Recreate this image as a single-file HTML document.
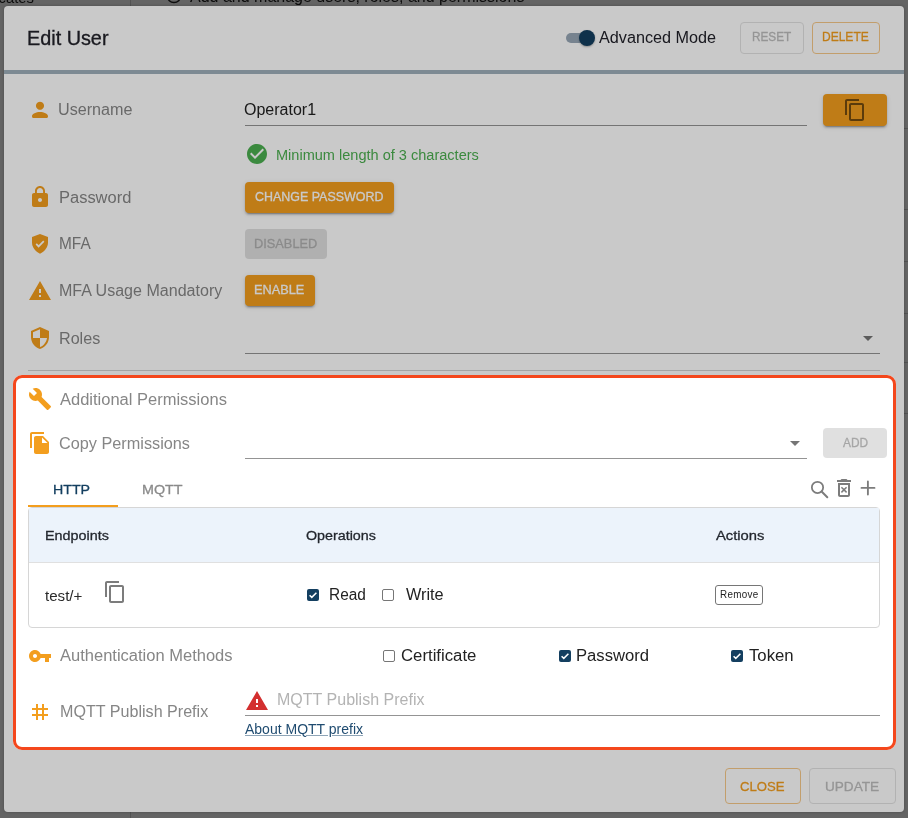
<!DOCTYPE html>
<html><head><meta charset="utf-8"><style>
html,body{margin:0;padding:0;}
body{width:908px;height:818px;position:relative;overflow:hidden;background:#fff;font-family:"Liberation Sans", sans-serif;}
.t{position:absolute;white-space:nowrap;}
#root{position:absolute;left:0;top:0;width:908px;height:818px;overflow:hidden;will-change:transform;}
.r{position:absolute;}
.ic{position:absolute;overflow:visible;}
#bg{position:absolute;left:0;top:0;width:908px;height:818px;background:#fff;}
#backdrop{position:absolute;left:0;top:0;width:908px;height:818px;background:rgba(0,0,0,0.5);}
#dlg{position:absolute;left:4px;top:6px;width:900px;height:806px;background:#fff;border-radius:4px;box-shadow:0 0 3px rgba(0,0,0,.25);}
#hl{position:absolute;left:13.2px;top:374.9px;width:882.9px;height:375.2px;box-sizing:border-box;border:3.1px solid #f4471c;border-radius:9px;box-shadow:0 0 0 2000px rgba(0,0,0,0.21);z-index:5;pointer-events:none;}
</style></head><body><div id="root">
<div id="bg">
<div class="t" id="t1" style="left:-1.50px;top:-9.03px;font-size:14.8px;line-height:14.8px;color:#222;font-weight:400;letter-spacing:0px;">cates</div>
<div class="r" style="left:130px;top:0px;width:1px;height:818px;background:#d4d4d4"></div>
<svg class="ic" style="left:163.5px;top:-14.5px;width:20px;height:20px" viewBox="0 0 20 20"><circle cx="10" cy="10" r="6.6" fill="none" stroke="#222" stroke-width="1.5"/></svg>
<div class="t" id="t2" style="left:190.00px;top:-11.04px;font-size:16px;line-height:16px;color:#222;font-weight:400;letter-spacing:0px;">Add and manage users, roles, and permissions</div>
<div class="r" style="left:896px;top:128px;width:12px;height:1px;background:#d0d0d0"></div>
<div class="r" style="left:896px;top:209px;width:12px;height:1px;background:#d0d0d0"></div>
<div class="r" style="left:896px;top:261px;width:12px;height:1px;background:#d0d0d0"></div>
<div class="r" style="left:896px;top:313px;width:12px;height:1px;background:#d0d0d0"></div>
<div class="r" style="left:896px;top:362px;width:12px;height:1px;background:#d0d0d0"></div>
<div class="r" style="left:896px;top:413px;width:12px;height:1px;background:#d0d0d0"></div>
</div>
<div id="backdrop"></div>
<div id="dlg"></div>
<div class="t" id="t3" style="left:27.28px;top:28.91px;font-size:19.6px;line-height:19.6px;color:#212129;font-weight:400;letter-spacing:0px;-webkit-text-stroke:0.3px #212129;transform:scaleX(1.0114);transform-origin:0 0;">Edit User</div>
<div class="r" style="left:566px;top:33px;width:28px;height:10px;background:#97a7b6;border-radius:5px"></div>
<div class="r" style="left:579.2px;top:29.9px;width:15.8px;height:15.8px;background:#143f60;border-radius:50%;box-shadow:0 1px 2px rgba(0,0,0,0.3)"></div>
<div class="t" id="t4" style="left:599.09px;top:29.96px;font-size:16px;line-height:16px;color:#22222a;font-weight:400;letter-spacing:0px;transform:scaleX(1.0123);transform-origin:0 0;">Advanced Mode</div>
<div class="r" style="left:740px;top:22px;width:63.5px;height:31.6px;box-sizing:border-box;border:1px solid #e2e2e2;border-radius:4px"></div>
<div class="t" id="t5" style="left:751.54px;top:30.75px;font-size:12.7px;line-height:12.7px;color:#bdbdbd;font-weight:400;letter-spacing:0px;-webkit-text-stroke:0.3px #bdbdbd;transform:scaleX(0.9286);transform-origin:0 0;">RESET</div>
<div class="r" style="left:812.3px;top:22px;width:67.5px;height:31.6px;box-sizing:border-box;border:1px solid #f7c98a;border-radius:4px"></div>
<div class="t" id="t6" style="left:822.31px;top:30.75px;font-size:12.7px;line-height:12.7px;color:#f39e1e;font-weight:400;letter-spacing:0px;-webkit-text-stroke:0.3px #f39e1e;transform:scaleX(0.9469);transform-origin:0 0;">DELETE</div>
<div class="r" style="left:4px;top:70px;width:900px;height:4px;background:#9fb0bb"></div>
<svg class="ic" style="left:28px;top:98px;width:24px;height:24px;" viewBox="0 0 24 24"><path fill="#f39e1e" d="M12 3.75a4.05 4.05 0 1 0 0.001 0z M4 18.3c0-2.7 4.2-4.3 8-4.3s8 1.6 8 4.3v0.2c0 0.9-0.6 1.5-1.5 1.5h-13c-0.9 0-1.5-0.6-1.5-1.5z"/></svg>
<div class="t" id="t7" style="left:58.18px;top:101.96px;font-size:16px;line-height:16px;color:#868686;font-weight:400;letter-spacing:0px;transform:scaleX(1.0097);transform-origin:0 0;">Username</div>
<div class="t" id="t8" style="left:244.00px;top:101.96px;font-size:16px;line-height:16px;color:#222;font-weight:400;letter-spacing:0px;transform:scaleX(1.0000);transform-origin:0 0;">Operator1</div>
<div class="r" style="left:245px;top:124.5px;width:562px;height:1px;background:#949494"></div>
<div class="r" style="left:823px;top:94px;width:64px;height:32px;background:#f39e1e;border-radius:4px;box-shadow:0 3px 1px -2px rgba(0,0,0,.2),0 2px 2px 0 rgba(0,0,0,.14),0 1px 5px 0 rgba(0,0,0,.12)"></div>
<svg class="ic" style="left:843px;top:98px;width:24px;height:24px;" viewBox="0 0 24 24"><path fill="rgba(0,0,0,0.52)" d="M16 1H4c-1.1 0-2 .9-2 2v14h2V3h12V1zm3 4H8c-1.1 0-2 .9-2 2v14c0 1.1.9 2 2 2h11c1.1 0 2-.9 2-2V7c0-1.1-.9-2-2-2zm0 16H8V7h11v14z"/></svg>
<svg class="ic" style="left:245px;top:142px;width:24px;height:24px;" viewBox="0 0 24 24"><path fill="#4caf50" d="M12 2C6.48 2 2 6.48 2 12s4.48 10 10 10 10-4.48 10-10S17.52 2 12 2zm-2 15-5-5 1.41-1.41L10 14.17l7.59-7.59L19 8l-9 9z"/></svg>
<div class="t" id="t9" style="left:275.96px;top:147.65px;font-size:14px;line-height:14px;color:#4caf50;font-weight:400;letter-spacing:0px;transform:scaleX(1.0387);transform-origin:0 0;">Minimum length of 3 characters</div>
<svg class="ic" style="left:28px;top:185px;width:24px;height:24px;" viewBox="0 0 24 24"><path fill="#f39e1e" d="M18 8h-1V6c0-2.76-2.24-5-5-5S7 3.24 7 6v2H6c-1.1 0-2 .9-2 2v10c0 1.1.9 2 2 2h12c1.1 0 2-.9 2-2V10c0-1.1-.9-2-2-2zm-6 9c-1.1 0-2-.9-2-2s.9-2 2-2 2 .9 2 2-.9 2-2 2zm3.1-9H8.9V6c0-1.71 1.39-3.1 3.1-3.1 1.71 0 3.1 1.39 3.1 3.1v2z"/></svg>
<div class="t" id="t10" style="left:59.37px;top:189.96px;font-size:16px;line-height:16px;color:#868686;font-weight:400;letter-spacing:0px;transform:scaleX(1.0294);transform-origin:0 0;">Password</div>
<div class="r" style="left:245px;top:182px;width:149.3px;height:31px;background:#f39e1e;border-radius:4px;box-shadow:0 3px 1px -2px rgba(0,0,0,.2),0 2px 2px 0 rgba(0,0,0,.14),0 1px 5px 0 rgba(0,0,0,.12)"></div>
<div class="t" id="t11" style="left:254.90px;top:190.75px;font-size:12.7px;line-height:12.7px;color:#fff;font-weight:400;letter-spacing:0px;-webkit-text-stroke:0.3px #fff;transform:scaleX(0.9809);transform-origin:0 0;">CHANGE PASSWORD</div>
<svg class="ic" style="left:28px;top:230px;width:24px;height:24px;" viewBox="0 0 24 24"><path fill="#f39e1e" d="M12 3.9L20 6.9V12.5C20 17.2 16.6 21.6 12 23.8 7.4 21.6 4 17.2 4 12.5V6.9z"/></svg>
<svg class="ic" style="left:28px;top:230px;width:24px;height:24px" viewBox="0 0 24 24"><path d="M8.2 13.8l2.4 2.6 5.2-5.2" fill="none" stroke="#fff" stroke-width="1.7"/></svg>
<div class="t" id="t12" style="left:59.44px;top:235.96px;font-size:16px;line-height:16px;color:#868686;font-weight:400;letter-spacing:0px;transform:scaleX(0.9625);transform-origin:0 0;">MFA</div>
<div class="r" style="left:245px;top:229px;width:82px;height:30px;background:#e0e0e0;border-radius:4px"></div>
<div class="t" id="t13" style="left:253.99px;top:237.75px;font-size:12.7px;line-height:12.7px;color:#b0b0b0;font-weight:400;letter-spacing:0px;-webkit-text-stroke:0.3px #b0b0b0;transform:scaleX(1.0082);transform-origin:0 0;">DISABLED</div>
<svg class="ic" style="left:28px;top:279px;width:24px;height:24px;" viewBox="0 0 24 24"><path fill="#f39e1e" d="M1 21h22L12 2 1 21zm12-3h-2v-2h2v2zm0-4h-2v-4h2v4z"/></svg>
<div class="t" id="t14" style="left:59.00px;top:282.96px;font-size:16px;line-height:16px;color:#868686;font-weight:400;letter-spacing:0px;transform:scaleX(1.0031);transform-origin:0 0;">MFA Usage Mandatory</div>
<div class="r" style="left:245px;top:275.2px;width:70px;height:30.5px;background:#f39e1e;border-radius:4px;box-shadow:0 3px 1px -2px rgba(0,0,0,.2),0 2px 2px 0 rgba(0,0,0,.14),0 1px 5px 0 rgba(0,0,0,.12)"></div>
<div class="t" id="t15" style="left:253.99px;top:283.75px;font-size:12.7px;line-height:12.7px;color:#fff;font-weight:400;letter-spacing:0px;-webkit-text-stroke:0.3px #fff;transform:scaleX(1.0061);transform-origin:0 0;">ENABLE</div>
<svg class="ic" style="left:28px;top:326px;width:24px;height:24px;" viewBox="0 0 24 24"><path fill="#f39e1e" d="M12 1L3 5v6c0 5.55 3.84 10.74 9 12 5.16-1.26 9-6.45 9-12V5l-9-4zm0 10.99h7c-.53 4.12-3.28 7.79-7 8.94V12H5V6.3l7-3.11v8.8z"/></svg>
<div class="t" id="t16" style="left:58.58px;top:330.96px;font-size:16px;line-height:16px;color:#868686;font-weight:400;letter-spacing:0px;transform:scaleX(1.0077);transform-origin:0 0;">Roles</div>
<div class="r" style="left:245px;top:352.8px;width:635px;height:1px;background:#949494"></div>
<svg class="ic" style="left:856px;top:326px;width:24px;height:24px;" viewBox="0 0 24 24"><path fill="rgba(0,0,0,0.54)" d="M7 10l5 5 5-5z"/></svg>
<div class="r" style="left:28px;top:370px;width:852px;height:1px;background:#d0d0d0"></div>
<div id="hl"></div>
<svg class="ic" style="left:28px;top:387px;width:24px;height:24px;" viewBox="0 0 24 24"><path fill="#f39e1e" d="M22.7 19l-9.1-9.1c.9-2.3.4-5-1.5-6.9-2-2-5-2.4-7.4-1.3L9 6 6 9 1.6 4.7C.4 7.1.9 10.1 2.9 12.1c1.9 1.9 4.6 2.4 6.9 1.5l9.1 9.1c.4.4 1 .4 1.4 0l2.3-2.3c.5-.4.5-1.1.1-1.4z"/></svg>
<div class="t" id="t17" style="left:60.39px;top:391.96px;font-size:16px;line-height:16px;color:#868686;font-weight:400;letter-spacing:0px;transform:scaleX(1.0311);transform-origin:0 0;">Additional Permissions</div>
<svg class="ic" style="left:28px;top:431px;width:24px;height:24px;" viewBox="0 0 24 24"><path fill="#f39e1e" d="M16 1H4c-1.1 0-2 .9-2 2v14h2V3h12V1zm-1 4l6 6v10c0 1.1-.9 2-2 2H7.99C6.89 23 6 22.1 6 21l.01-14c0-1.1.89-2 1.99-2h7zm-1 7h5.5L14 6.5V12z"/></svg>
<div class="t" id="t18" style="left:59.37px;top:435.96px;font-size:16px;line-height:16px;color:#868686;font-weight:400;letter-spacing:0px;transform:scaleX(1.0157);transform-origin:0 0;">Copy Permissions</div>
<div class="r" style="left:245px;top:457.8px;width:562px;height:1px;background:#949494"></div>
<svg class="ic" style="left:783px;top:431px;width:24px;height:24px;" viewBox="0 0 24 24"><path fill="rgba(0,0,0,0.54)" d="M7 10l5 5 5-5z"/></svg>
<div class="r" style="left:823px;top:428px;width:64px;height:29.5px;background:#e0e0e0;border-radius:4px"></div>
<div class="t" id="t19" style="left:842.67px;top:436.75px;font-size:12.7px;line-height:12.7px;color:#a6a6a6;font-weight:400;letter-spacing:0px;-webkit-text-stroke:0.3px #a6a6a6;transform:scaleX(0.9370);transform-origin:0 0;">ADD</div>
<div class="t" id="t20" style="left:53.37px;top:482.90px;font-size:13.7px;line-height:13.7px;color:#143f60;font-weight:400;letter-spacing:0px;-webkit-text-stroke:0.3px #143f60;transform:scaleX(1.0371);transform-origin:0 0;">HTTP</div>
<div class="t" id="t21" style="left:141.98px;top:482.90px;font-size:13.7px;line-height:13.7px;color:#8a8a8a;font-weight:400;letter-spacing:0px;-webkit-text-stroke:0.3px #8a8a8a;transform:scaleX(1.0447);transform-origin:0 0;">MQTT</div>
<div class="r" style="left:28px;top:505px;width:90px;height:2px;background:#f39e1e"></div>
<svg class="ic" style="left:808px;top:478px;width:24px;height:24px" viewBox="0 0 24 24"><circle cx="9.5" cy="9.4" r="5.65" fill="none" stroke="#7c7c7c" stroke-width="1.75"/><path d="M13.6 13.5L19.3 19.2" stroke="#7c7c7c" stroke-width="2" stroke-linecap="round"/></svg>
<svg class="ic" style="left:832px;top:476px;width:24px;height:24px" viewBox="0 0 24 24"><path fill="#7c7c7c" d="M15.5 4l-1-1h-5l-1 1H5v2h14V4zM6 19c0 1.1.9 2 2 2h8c1.1 0 2-.9 2-2V7H6v12zM8 9h8v10H8V9z"/><path d="M9.9 11.7L14.1 15.9M14.1 11.7L9.9 15.9" stroke="#7c7c7c" stroke-width="1.6" stroke-linecap="round"/></svg>
<svg class="ic" style="left:856px;top:476px;width:24px;height:24px" viewBox="0 0 24 24"><path d="M5.5 11.9H18.5M11.9 5.4V18.5" stroke="#7c7c7c" stroke-width="1.85" stroke-linecap="round"/></svg>
<div class="r" style="left:28px;top:507px;width:852px;height:121px;box-sizing:border-box;border:1px solid #d6d6d6;border-radius:4px;overflow:hidden"></div>
<div class="r" style="left:29px;top:508px;width:850px;height:54px;background:#ecf3fb"></div>
<div class="r" style="left:29px;top:562px;width:850px;height:1px;background:#e0e0e0"></div>
<div class="t" id="t22" style="left:44.56px;top:528.90px;font-size:13.7px;line-height:13.7px;color:#23272e;font-weight:400;letter-spacing:0px;-webkit-text-stroke:0.3px #23272e;transform:scaleX(1.0483);transform-origin:0 0;">Endpoints</div>
<div class="t" id="t23" style="left:306.47px;top:528.90px;font-size:13.7px;line-height:13.7px;color:#23272e;font-weight:400;letter-spacing:0px;-webkit-text-stroke:0.3px #23272e;transform:scaleX(1.0439);transform-origin:0 0;">Operations</div>
<div class="t" id="t24" style="left:715.94px;top:528.90px;font-size:13.7px;line-height:13.7px;color:#23272e;font-weight:400;letter-spacing:0px;-webkit-text-stroke:0.3px #23272e;transform:scaleX(1.0778);transform-origin:0 0;">Actions</div>
<div class="t" id="t25" style="left:45.30px;top:588.65px;font-size:14px;line-height:14px;color:#2a2a2a;font-weight:400;letter-spacing:0px;transform:scaleX(1.0794);transform-origin:0 0;">test/+</div>
<svg class="ic" style="left:103px;top:580px;width:24px;height:24px;" viewBox="0 0 24 24"><path fill="#7c7c7c" d="M16 1H4c-1.1 0-2 .9-2 2v14h2V3h12V1zm3 4H8c-1.1 0-2 .9-2 2v14c0 1.1.9 2 2 2h11c1.1 0 2-.9 2-2V7c0-1.1-.9-2-2-2zm0 16H8V7h11v14z"/></svg>
<div class="r" style="left:307px;top:589px;width:12px;height:12px;background:#143f60;border-radius:2px"></div>
<svg class="ic" style="left:307px;top:589px;width:12px;height:12px" viewBox="0 0 12 12"><path d="M2.6 6.2l2.2 2.2 4.6-4.6" fill="none" stroke="#fff" stroke-width="1.5"/></svg>
<div class="t" id="t26" style="left:329.35px;top:586.96px;font-size:16px;line-height:16px;color:#222;font-weight:400;letter-spacing:0px;transform:scaleX(0.9639);transform-origin:0 0;">Read</div>
<div class="r" style="left:382px;top:589px;width:12px;height:12px;box-sizing:border-box;border:1.3px solid #767676;border-radius:2px;background:#fff"></div>
<div class="t" id="t27" style="left:406.00px;top:586.96px;font-size:16px;line-height:16px;color:#222;font-weight:400;letter-spacing:0px;transform:scaleX(1.0167);transform-origin:0 0;">Write</div>
<div class="r" style="left:715px;top:585px;width:48px;height:20px;box-sizing:border-box;border:1px solid #767676;border-radius:3px;background:#fff"></div>
<div class="t" id="t28" style="left:720.31px;top:590.03px;font-size:10px;line-height:10px;color:#222;font-weight:400;letter-spacing:0.3px;transform:scaleX(0.9842);transform-origin:0 0;">Remove</div>
<svg class="ic" style="left:28px;top:644px;width:24px;height:24px;" viewBox="0 0 24 24"><path fill="#f39e1e" d="M12.65 10C11.83 7.67 9.61 6 7 6c-3.31 0-6 2.69-6 6s2.69 6 6 6c2.61 0 4.83-1.67 5.65-4H17v4h4v-4h2v-4H12.65zM7 14c-1.1 0-2-.9-2-2s.9-2 2-2 2 .9 2 2-.9 2-2 2z"/></svg>
<div class="t" id="t29" style="left:60.00px;top:647.96px;font-size:16px;line-height:16px;color:#868686;font-weight:400;letter-spacing:0px;transform:scaleX(1.0317);transform-origin:0 0;">Authentication Methods</div>
<div class="r" style="left:383px;top:650px;width:12px;height:12px;box-sizing:border-box;border:1.3px solid #767676;border-radius:2px;background:#fff"></div>
<div class="t" id="t30" style="left:401.18px;top:647.96px;font-size:16px;line-height:16px;color:#222;font-weight:400;letter-spacing:0px;transform:scaleX(1.0465);transform-origin:0 0;">Certificate</div>
<div class="r" style="left:559px;top:650px;width:12px;height:12px;background:#143f60;border-radius:2px"></div>
<svg class="ic" style="left:559px;top:650px;width:12px;height:12px" viewBox="0 0 12 12"><path d="M2.6 6.2l2.2 2.2 4.6-4.6" fill="none" stroke="#fff" stroke-width="1.5"/></svg>
<div class="t" id="t31" style="left:575.96px;top:647.96px;font-size:16px;line-height:16px;color:#222;font-weight:400;letter-spacing:0px;transform:scaleX(1.0397);transform-origin:0 0;">Password</div>
<div class="r" style="left:731px;top:650px;width:12px;height:12px;background:#143f60;border-radius:2px"></div>
<svg class="ic" style="left:731px;top:650px;width:12px;height:12px" viewBox="0 0 12 12"><path d="M2.6 6.2l2.2 2.2 4.6-4.6" fill="none" stroke="#fff" stroke-width="1.5"/></svg>
<div class="t" id="t32" style="left:748.59px;top:647.96px;font-size:16px;line-height:16px;color:#222;font-weight:400;letter-spacing:0px;transform:scaleX(1.0463);transform-origin:0 0;">Token</div>
<svg class="ic" style="left:28px;top:700px;width:24px;height:24px;" viewBox="0 0 24 24"><path fill="#f39e1e" d="M20 10V8h-4V4h-2v4h-4V4H8v4H4v2h4v4H4v2h4v4h2v-4h4v4h2v-4h4v-2h-4v-4h4zm-6 4h-4v-4h4v4z"/></svg>
<div class="t" id="t33" style="left:59.59px;top:703.96px;font-size:16px;line-height:16px;color:#868686;font-weight:400;letter-spacing:0px;transform:scaleX(1.0062);transform-origin:0 0;">MQTT Publish Prefix</div>
<svg class="ic" style="left:245px;top:689px;width:24px;height:24px;" viewBox="0 0 24 24"><path fill="#d32f2f" d="M1 21h22L12 2 1 21zm12-3h-2v-2h2v2zm0-4h-2v-4h2v4z"/></svg>
<div class="t" id="t34" style="left:276.90px;top:691.96px;font-size:16px;line-height:16px;color:#b3b3b3;font-weight:400;letter-spacing:0px;transform:scaleX(1.0014);transform-origin:0 0;">MQTT Publish Prefix</div>
<div class="r" style="left:245px;top:714.8px;width:635px;height:1px;background:#949494"></div>
<div class="t" id="t35" style="left:245.00px;top:721.65px;font-size:14px;line-height:14px;color:#1f4b70;font-weight:400;letter-spacing:0px;text-decoration:underline;text-decoration-color:rgba(31,75,112,0.5);text-underline-offset:2pxtransform:scaleX(1.0068);transform-origin:0 0;">About MQTT prefix</div>
<div class="r" style="left:725.3px;top:768.2px;width:75.5px;height:35.5px;box-sizing:border-box;border:1px solid #f7c98a;border-radius:4px"></div>
<div class="t" id="t36" style="left:740.42px;top:779.90px;font-size:13.7px;line-height:13.7px;color:#f39e1e;font-weight:400;letter-spacing:0px;-webkit-text-stroke:0.3px #f39e1e;transform:scaleX(0.9600);transform-origin:0 0;">CLOSE</div>
<div class="r" style="left:809.3px;top:768.2px;width:86.6px;height:35.5px;box-sizing:border-box;border:1px solid #e2e2e2;border-radius:4px"></div>
<div class="t" id="t37" style="left:824.90px;top:779.90px;font-size:13.7px;line-height:13.7px;color:#bdbdbd;font-weight:400;letter-spacing:0px;-webkit-text-stroke:0.3px #bdbdbd;transform:scaleX(0.9926);transform-origin:0 0;">UPDATE</div>
</div></body></html>
